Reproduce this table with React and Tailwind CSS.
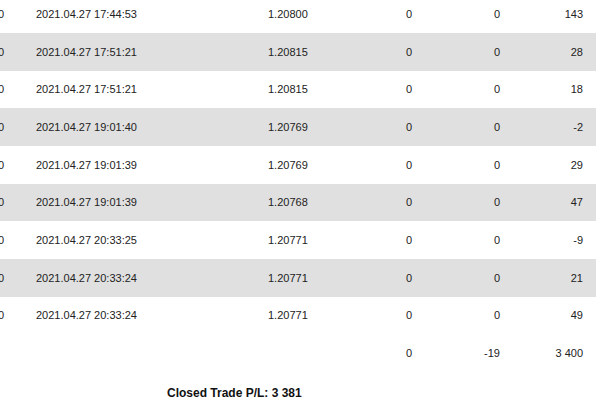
import React from 'react';

const trades = [
  { time: '2021.04.27 17:44:53', price: '1.20800', a: '0', b: '0', pl: '143' },
  { time: '2021.04.27 17:51:21', price: '1.20815', a: '0', b: '0', pl: '28' },
  { time: '2021.04.27 17:51:21', price: '1.20815', a: '0', b: '0', pl: '18' },
  { time: '2021.04.27 19:01:40', price: '1.20769', a: '0', b: '0', pl: '-2' },
  { time: '2021.04.27 19:01:39', price: '1.20769', a: '0', b: '0', pl: '29' },
  { time: '2021.04.27 19:01:39', price: '1.20768', a: '0', b: '0', pl: '47' },
  { time: '2021.04.27 20:33:25', price: '1.20771', a: '0', b: '0', pl: '-9' },
  { time: '2021.04.27 20:33:24', price: '1.20771', a: '0', b: '0', pl: '21' },
  { time: '2021.04.27 20:33:24', price: '1.20771', a: '0', b: '0', pl: '49' },
];

function Row({ lead, time, price, a, b, pl, shaded }) {
  return (
    <div className={`flex items-center h-[37.7px] ${shaded ? 'bg-[#e0e0e0]' : 'bg-white'}`}>
      <div className="w-[34px] text-right">{lead}</div>
      <div className="w-[264px] pl-[32px]">{time}</div>
      <div className="w-[60px]">{price}</div>
      <div className="w-[84px] text-right">{a}</div>
      <div className="w-[88px] text-right">{b}</div>
      <div className="w-[83px] text-right">{pl}</div>
      <div className="w-[13px]" />
    </div>
  );
}

export default function App() {
  return (
    <div
      className="w-[600px] h-[418px] overflow-hidden bg-white text-[11px] text-[#222]"
      style={{ fontFamily: '"Liberation Sans", Arial, sans-serif' }}
    >
      <div className="w-[626px] ml-[-30px] mt-[-4.7px]">
        {trades.map((t, i) => (
          <Row key={i} lead="0" {...t} shaded={i % 2 === 1} />
        ))}
        <Row lead="" time="" price="" a="0" b="-19" pl="3 400" />
      </div>
      <div className="mt-[14px] pl-[167px] text-[12px] font-bold text-[#111] leading-[14px]">
        Closed Trade P/L: 3 381
      </div>
    </div>
  );
}
